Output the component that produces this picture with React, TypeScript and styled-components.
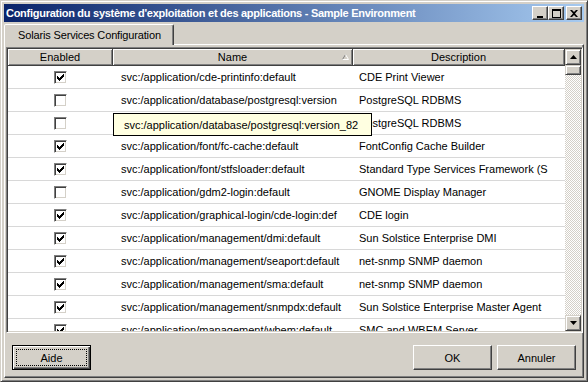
import styled, { createGlobalStyle } from 'styled-components';

const FACE = '#D4D0C8';
const FONT = `"Liberation Sans", Arial, sans-serif`;

type Service = { enabled: boolean; name: string; description: string };

const SERVICES: Service[] = [
  { enabled: true, name: 'svc:/application/cde-printinfo:default', description: 'CDE Print Viewer' },
  { enabled: false, name: 'svc:/application/database/postgresql:version', description: 'PostgreSQL RDBMS' },
  { enabled: false, name: 'svc:/application/database/postgresql:version_82', description: 'PostgreSQL RDBMS' },
  { enabled: true, name: 'svc:/application/font/fc-cache:default', description: 'FontConfig Cache Builder' },
  { enabled: true, name: 'svc:/application/font/stfsloader:default', description: 'Standard Type Services Framework (S' },
  { enabled: false, name: 'svc:/application/gdm2-login:default', description: 'GNOME Display Manager' },
  { enabled: true, name: 'svc:/application/graphical-login/cde-login:def', description: 'CDE login' },
  { enabled: true, name: 'svc:/application/management/dmi:default', description: 'Sun Solstice Enterprise DMI' },
  { enabled: true, name: 'svc:/application/management/seaport:default', description: 'net-snmp SNMP daemon' },
  { enabled: true, name: 'svc:/application/management/sma:default', description: 'net-snmp SNMP daemon' },
  { enabled: true, name: 'svc:/application/management/snmpdx:default', description: 'Sun Solstice Enterprise Master Agent' },
  { enabled: true, name: 'svc:/application/management/wbem:default', description: 'SMC and WBEM Server' },
];

const GlobalStyle = createGlobalStyle`
  html, body {
    margin: 0;
    padding: 0;
    background: ${FACE};
  }
  * {
    box-sizing: border-box;
  }
`;

const CheckMark = () => (
  <svg width="7" height="7" viewBox="0 0 7 7">
    {[2, 3, 4, 3, 2, 1, 0].map((y, x) => (
      <rect key={x} x={x} y={y} width="1" height="3" fill="#000" />
    ))}
  </svg>
);

const App = () => {
  return (
    <>
      <GlobalStyle />
      <Window>
        <TitleBar>
          <Title>Configuration du système d'exploitation et des applications - Sample Environment</Title>
          <CaptionButtons>
            <CaptionButton>
              <svg width="8" height="9" viewBox="0 0 8 9">
                <rect x="1" y="7" width="6" height="2" fill="#000" />
              </svg>
            </CaptionButton>
            <CaptionButton>
              <svg width="9" height="9" viewBox="0 0 9 9">
                <path d="M0 0h9v9h-9z M1 2v6h7v-6z" fill="#000" fillRule="evenodd" />
              </svg>
            </CaptionButton>
            <CaptionButton $gap>
              <svg width="8" height="7" viewBox="0 0 8 7">
                <path d="M0 0h2l2 2 2-2h2l-3 3.5 3 3.5h-2l-2-2-2 2h-2l3-3.5z" fill="#000" />
              </svg>
            </CaptionButton>
          </CaptionButtons>
        </TitleBar>

        <TabStrip>
          <Tab>Solaris Services Configuration</Tab>
        </TabStrip>

        <Panel>
          <TableBox>
            <Grid>
              <HeaderRow>
                <HeaderCell>Enabled</HeaderCell>
                <HeaderCell>
                  Name
                  <SortArrow width="7" height="6" viewBox="0 0 7 6">
                    <path d="M0.5 5.5 L3.5 0.5" stroke="#808080" fill="none" />
                    <path d="M3.5 0.5 L6.5 5.5 L0.5 5.5" stroke="#fff" fill="none" />
                  </SortArrow>
                </HeaderCell>
                <HeaderCell>Description</HeaderCell>
              </HeaderRow>
              {SERVICES.map((s) => (
                <Row key={s.name}>
                  <CheckCell>
                    <CheckBox>{s.enabled && <CheckMark />}</CheckBox>
                  </CheckCell>
                  <NameCell>{s.name}</NameCell>
                  <DescCell>{s.description}</DescCell>
                </Row>
              ))}
              <Tooltip>svc:/application/database/postgresql:version_82</Tooltip>
            </Grid>
            <ScrollBar>
              <ScrollButton>
                <svg width="7" height="4" viewBox="0 0 7 4">
                  <path d="M3.5 0 L7 4 L0 4z" fill="#000" />
                </svg>
              </ScrollButton>
              <Thumb />
              <Track />
              <ScrollButton>
                <svg width="7" height="4" viewBox="0 0 7 4">
                  <path d="M0 0 L7 0 L3.5 4z" fill="#000" />
                </svg>
              </ScrollButton>
            </ScrollBar>
          </TableBox>

          <ButtonRow>
            <Button $default>
              <FocusLabel $focused>Aide</FocusLabel>
            </Button>
            <Spacer />
            <Button>
              <FocusLabel>OK</FocusLabel>
            </Button>
            <Button>
              <FocusLabel>Annuler</FocusLabel>
            </Button>
          </ButtonRow>
        </Panel>
      </Window>
    </>
  );
};

const Window = styled.div`
  width: 588px;
  height: 382px;
  display: flex;
  flex-direction: column;
  background: ${FACE};
  border: 1px solid;
  border-color: ${FACE} #404040 #404040 ${FACE};
  box-shadow: inset 1px 1px #fff, inset -1px -1px #808080;
  padding: 3px;
  font-family: ${FONT};
  font-size: 11px;
  color: #000;
`;

const TitleBar = styled.div`
  height: 18px;
  flex: none;
  display: flex;
  align-items: center;
  justify-content: space-between;
  padding: 0 2px 0 2px;
  background: linear-gradient(to right, #0a246a, #a6caf0);
`;

const Title = styled.div`
  color: #fff;
  font-weight: bold;
  font-size: 11px;
  letter-spacing: -0.27px;
  white-space: nowrap;
`;

const CaptionButtons = styled.div`
  display: flex;
  align-items: center;
`;

const CaptionButton = styled.div<{ $gap?: boolean }>`
  width: 16px;
  height: 14px;
  margin-left: ${(p) => (p.$gap ? '2px' : '0')};
  display: flex;
  align-items: center;
  justify-content: center;
  background: ${FACE};
  border: 1px solid;
  border-color: #fff #404040 #404040 #fff;
  box-shadow: inset -1px -1px #808080;
`;

const TabStrip = styled.div`
  flex: none;
  display: flex;
  padding: 2px 0 0 0;
  position: relative;
  z-index: 1;
`;

const Tab = styled.div`
  height: 21px;
  margin-bottom: -1px;
  padding: 0 12px 0 13px;
  display: flex;
  align-items: center;
  letter-spacing: -0.15px;
  background: ${FACE};
  border: 1px solid;
  border-bottom: none;
  border-color: #fff #404040 transparent #fff;
  border-top-left-radius: 2px;
  border-top-right-radius: 2px;
  box-shadow: inset -1px 0 #808080;
`;

const Panel = styled.div`
  flex: 1;
  display: flex;
  flex-direction: column;
  padding: 2px 0 0 1px;
  border: 1px solid;
  border-color: #fff #404040 #404040 #fff;
  box-shadow: inset -1px -1px #808080;
`;

const TableBox = styled.div`
  height: 286px;
  flex: none;
  display: flex;
  border: 1px solid;
  border-color: #808080 #fff #fff #808080;
  box-shadow: inset 1px 1px #404040, inset -1px -1px ${FACE};
  padding: 1px;
  background: #fff;
`;

const Grid = styled.div`
  flex: 1;
  overflow: hidden;
  position: relative;
`;

const COLUMNS = '105px 240px 1fr';

const HeaderRow = styled.div`
  display: grid;
  grid-template-columns: ${COLUMNS};
  height: 17px;
`;

const HeaderCell = styled.div`
  position: relative;
  display: flex;
  align-items: center;
  justify-content: center;
  background: ${FACE};
  border-right: 1px solid #404040;
  border-bottom: 1px solid #404040;
  box-shadow: inset 1px 1px #fff, inset -1px -1px #808080;
  white-space: nowrap;
`;

const SortArrow = styled.svg`
  position: absolute;
  right: 3px;
  top: 5px;
`;

const Row = styled.div`
  display: grid;
  grid-template-columns: ${COLUMNS};
  height: 23px;
  border-bottom: 1px solid #d8d8d8;
  align-items: center;
  white-space: nowrap;
`;

const CheckCell = styled.div`
  display: flex;
  justify-content: center;
`;

const CheckBox = styled.span`
  width: 13px;
  height: 13px;
  display: flex;
  align-items: center;
  justify-content: center;
  background: #fff;
  border: 1px solid;
  border-color: #808080 #fff #fff #808080;
  box-shadow: inset 1px 1px #404040, inset -1px -1px ${FACE};
`;

const NameCell = styled.div`
  padding-left: 8px;
  overflow: hidden;
`;

const DescCell = styled.div`
  padding-left: 6px;
  overflow: hidden;
`;

const Tooltip = styled.div`
  position: absolute;
  left: 105px;
  top: 64px;
  width: 259px;
  height: 23px;
  padding-left: 10px;
  display: flex;
  align-items: center;
  background: #ffffe1;
  border: 1px solid #000;
  white-space: nowrap;
`;

const ScrollBar = styled.div`
  width: 16px;
  flex: none;
  display: flex;
  flex-direction: column;
`;

const ScrollButton = styled.div`
  width: 16px;
  height: 16px;
  flex: none;
  display: flex;
  align-items: center;
  justify-content: center;
  background: ${FACE};
  border: 1px solid;
  border-color: ${FACE} #404040 #404040 ${FACE};
  box-shadow: inset 1px 1px #fff, inset -1px -1px #808080;
`;

const Thumb = styled(ScrollButton)`
  height: 10px;
`;

const Track = styled.div`
  flex: 1;
  background-color: ${FACE};
  background-image: repeating-conic-gradient(#fff 0 25%, ${FACE} 0 50%);
  background-size: 2px 2px;
`;

const ButtonRow = styled.div`
  display: flex;
  gap: 5px;
  padding: 12px 7px 0 6px;
`;

const Spacer = styled.div`
  flex: 1;
`;

const Button = styled.button<{ $default?: boolean }>`
  width: 79px;
  height: 25px;
  padding: 3px;
  display: flex;
  background: ${FACE};
  font-family: ${FONT};
  font-size: 11px;
  color: #000;
  border: 1px solid;
  border-color: ${(p) => (p.$default ? '#000' : '#fff #404040 #404040 #fff')};
  box-shadow: ${(p) =>
    p.$default
      ? 'inset 1px 1px #fff, inset -1px -1px #404040, inset -2px -2px #808080'
      : 'inset -1px -1px #808080, inset 1px 1px ' + FACE};
`;

const FocusLabel = styled.span<{ $focused?: boolean }>`
  flex: 1;
  display: flex;
  align-items: center;
  justify-content: center;
  border: 1px dotted ${(p) => (p.$focused ? '#000' : 'transparent')};
`;

export default App;
